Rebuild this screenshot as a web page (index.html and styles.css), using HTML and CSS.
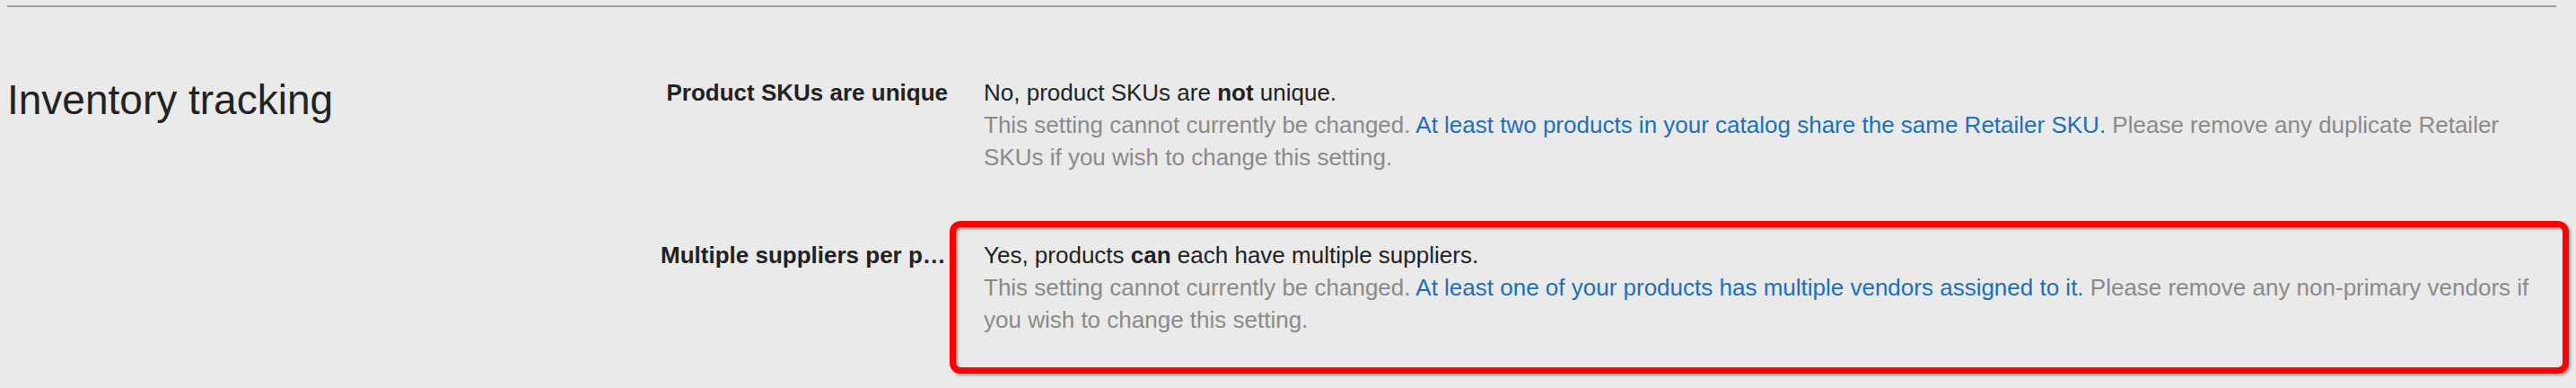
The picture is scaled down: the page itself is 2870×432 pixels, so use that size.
FILE: index.html
```html
<!DOCTYPE html>
<html lang="en">
<head>
    <meta charset="UTF-8">
    <title>Inventory settings</title>
    <link rel="stylesheet" href="styles.css">
</head>
<body>
    <hr class="divider">

    <!-- Inventory tracking section -->
    <section class="settings-section">
        <h2 class="section-title">Inventory tracking</h2>

        <div class="settings-list">
            <div class="setting-row">
                <div class="setting-label">Product SKUs are unique</div>
                <div class="setting-value">
                    <div class="value-text">No, product SKUs are <strong>not</strong> unique.</div>
                    <div class="value-help">
                        This setting cannot currently be changed.
                        <a href="#" class="help-link">At least two products in your catalog share the same Retailer SKU.</a>
                        Please remove any duplicate Retailer SKUs if you wish to change this setting.
                    </div>
                </div>
            </div>

            <div class="setting-row">
                <div class="setting-label" title="Multiple suppliers per product">Multiple suppliers per product</div>
                <div class="setting-value highlighted">
                    <div class="value-text">Yes, products <strong>can</strong> each have multiple suppliers.</div>
                    <div class="value-help">
                        This setting cannot currently be changed.
                        <a href="#" class="help-link">At least one of your products has multiple vendors assigned to it.</a>
                        Please remove any non-primary vendors if you wish to change this setting.
                    </div>
                </div>
            </div>
        </div>
    </section>
</body>
</html>
```

FILE: styles.css
```css
html {
    background: #eaeaea;
}

body {
    box-sizing: border-box;
    min-height: 432px;
    margin: 0;
    padding: 6px 22px 0 8px;
    background: #eaeaea;
    color: #222222;
    font-family: "Liberation Sans", Arial, sans-serif;
    font-size: 26px;
    line-height: 36px;
}

.divider {
    margin: 0;
    border: none;
    border-top: 2px solid #9d9d9d;
}

.settings-section {
    display: flex;
    padding-top: 77px;
}

.section-title {
    width: 728px;
    flex-shrink: 0;
    margin: 0;
    font-size: 46px;
    line-height: 52px;
    font-weight: normal;
    color: #222222;
}

.settings-list {
    flex: 1;
    display: flex;
    flex-direction: column;
    gap: 73px;
}

.setting-row {
    display: grid;
    grid-template-columns: 320px 1fr;
    column-gap: 40px;
}

.setting-label {
    font-weight: bold;
    text-align: right;
    white-space: nowrap;
    overflow: hidden;
    text-overflow: ellipsis;
}

.setting-value {
    position: relative;
}

.value-help {
    color: #8a8a8a;
}

.help-link {
    color: #1a6fc2;
    text-decoration: none;
}

/* red annotation box drawn over the second setting */
.highlighted::after {
    content: "";
    position: absolute;
    top: -20px;
    left: -38px;
    right: -14px;
    bottom: -42px;
    border: 7px solid #ff0000;
    border-radius: 12px;
    filter: drop-shadow(2px 2px 1.5px rgba(0, 0, 0, 0.35));
    pointer-events: none;
}
```
